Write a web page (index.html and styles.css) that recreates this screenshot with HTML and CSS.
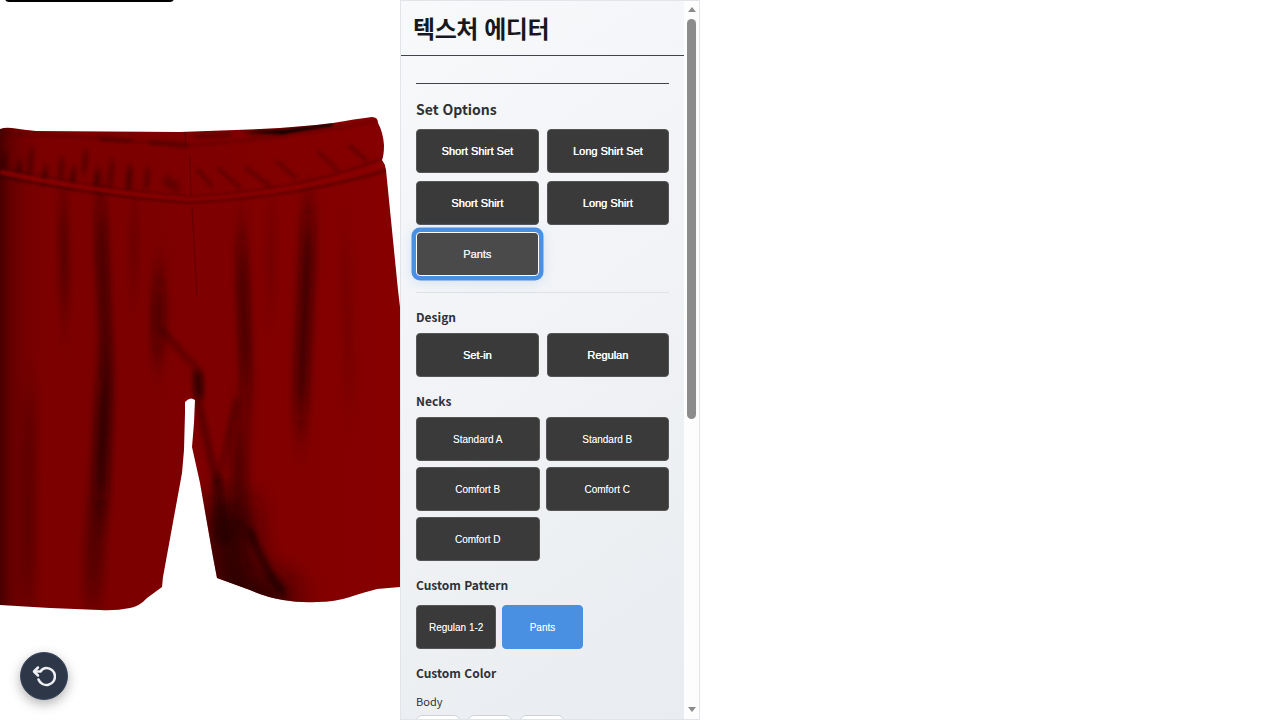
FILE: index.html
```html
<!DOCTYPE html>
<html lang="ko">
<head>
<meta charset="utf-8">
<title>텍스처 에디터</title>
<link rel="stylesheet" href="styles.css">
</head>
<body>
<div class="app">
  <main class="stage">
    <div class="top-pill"></div>
    <svg class="garment" viewBox="0 0 400 720" width="400" height="720" aria-hidden="true">
      <defs>
        <clipPath id="shorts">
          <path d="M0 129 Q5 127 12 128 Q25 130 36 131 L180 132 L260 129 Q300 127 333 123 Q355 119 372 117 Q378 117 378 123 Q383 132 384 145 Q384 155 382 160 Q385 164 386 170 L388 190 L398 290 L400 307 L400 587 L377 589 Q365 592 350 597 Q335 602 317 602 Q300 603 283 600 Q265 597 250 590 L217 578 L213 557 L200 483 L192 447 L194 423 L195 400 Q190 396 185 402 L185 413 L184 450 L182 473 L163 577 L162 587 L147 598 Q140 606 130 608 Q115 611 100 610 L50 608 L0 605 Z"/>
        </clipPath>
        <linearGradient id="base" x1="0" x2="400" y1="0" y2="0" gradientUnits="userSpaceOnUse">
          <stop offset="0" stop-color="#480000"/>
          <stop offset=".025" stop-color="#640000"/>
          <stop offset=".06" stop-color="#740000"/>
          <stop offset=".11" stop-color="#7c0000"/>
          <stop offset=".5" stop-color="#7e0000"/>
          <stop offset=".7" stop-color="#820000"/>
          <stop offset="1" stop-color="#860000"/>
        </linearGradient>
        <filter id="v" x="-200%" y="-30%" width="500%" height="160%"><feGaussianBlur stdDeviation="4 26"/></filter>
        <filter id="w" x="-60%" y="-40%" width="220%" height="180%"><feGaussianBlur stdDeviation="2.500 4"/></filter>
        <filter id="b1" x="-30%" y="-30%" width="160%" height="160%"><feGaussianBlur stdDeviation="1.4"/></filter>
        <filter id="b2" x="-30%" y="-30%" width="160%" height="160%"><feGaussianBlur stdDeviation="2.2"/></filter>
        <filter id="b3" x="-100%" y="-20%" width="300%" height="140%"><feGaussianBlur stdDeviation="3"/></filter>
        <filter id="b14" x="-100%" y="-20%" width="300%" height="140%"><feGaussianBlur stdDeviation="14"/></filter>
      </defs>
      <g clip-path="url(#shorts)">
        <rect width="400" height="720" fill="url(#base)"/>
        <g fill="none" stroke="#1c0000" filter="url(#b14)">
          <path d="M228 500 L232 585 L290 606" stroke-width="46" stroke-opacity=".8"/>
        </g>
        <g fill="none" stroke="#100000" filter="url(#v)">
          <path d="M63 200 L65 310" stroke-width="6" stroke-opacity=".5"/>
          <path d="M100 205 L108 390" stroke-width="9" stroke-opacity=".65"/>
          <path d="M105 380 L100 500" stroke-width="15" stroke-opacity=".7"/>
          <path d="M98 490 L92 600" stroke-width="20" stroke-opacity=".3"/>
          <path d="M135 205 L133 290" stroke-width="5" stroke-opacity=".3"/>
          <path d="M30 400 L28 600" stroke-width="14" stroke-opacity=".2"/>
          <path d="M160 285 L157 345" stroke-width="12" stroke-opacity=".65"/>
          <path d="M241 240 L247 395" stroke-width="9" stroke-opacity=".65"/>
          <path d="M309 215 L300 420" stroke-width="13" stroke-opacity=".6"/>
          <path d="M272 215 L270 300" stroke-width="6" stroke-opacity=".2"/>
          <path d="M345 240 L350 400" stroke-width="9" stroke-opacity=".12"/>
          <path d="M240 420 L238 520" stroke-width="16" stroke-opacity=".45"/>
        </g>
        <g fill="none" stroke="#0c0000" stroke-linecap="round" filter="url(#b3)">
          <path d="M163 330 Q178 350 197 368" stroke-width="4" stroke-opacity=".4"/>
          <path d="M198 374 L199 395" stroke-width="7" stroke-opacity=".9"/>
          <path d="M198 400 L217 485" stroke-width="3" stroke-opacity=".7"/>
          <path d="M237 400 L217 485" stroke-width="2.500" stroke-opacity=".55"/>
          <path d="M218 480 L222 540" stroke-width="8" stroke-opacity=".6"/>
          <path d="M250 530 Q262 565 282 592" stroke-width="4.500" stroke-opacity=".85"/>
        </g>
        <g fill="none" stroke="#080000" stroke-linecap="round" filter="url(#w)" stroke-opacity=".4" stroke-width="4">
          <path d="M6 155 L3 168 M32 150 L29 176 M62 160 L60 178 M86 152 L84 172 M112 162 L110 186 M148 170 L146 188"/>
          <path d="M20 164 L18 176 M46 168 L44 182 M74 170 L72 184 M98 172 L96 186 M130 168 L128 190 M165 180 L178 188" stroke-opacity=".55"/>
        </g>
        <g fill="none" stroke="#080000" stroke-linecap="round" filter="url(#b2)" stroke-opacity=".32" stroke-width="3">
          <path d="M198 170 L212 186 M218 168 L240 188 M246 168 L270 186 M278 162 L296 178 M318 152 L338 170 M350 146 L366 160"/>
          <path d="M100 139 L130 141 M150 142 L186 145 M196 136 L230 135 M250 134 L285 132" stroke-opacity=".35"/>
        </g>
        <path d="M0 168 Q100 190 190 197 Q300 192 386 157" fill="none" stroke="#230000" stroke-opacity=".5" stroke-width="1.600" filter="url(#b1)"/>
        <path d="M0 176 Q100 196 190 202 Q300 196 388 170" fill="none" stroke="#230000" stroke-opacity=".7" stroke-width="1.800" filter="url(#b1)"/>
        <path d="M0 172 Q100 193 190 199.500 Q300 194 387 163" fill="none" stroke="#8c0000" stroke-width="3.500" filter="url(#b1)"/>
        <path d="M0 134 Q60 135 96 138 L186 146 Q290 138 378 121" fill="none" stroke="#250000" stroke-opacity=".35" stroke-width="1.500" filter="url(#b1)"/>
        <path d="M185 131 L186 146 M190 155 L191 196 M192 207 L197 297" fill="none" stroke="#3c0000" stroke-width="1" stroke-opacity=".45"/>
        <path d="M240 132 L283 130 L333 123 L332 126 L283 134 Z" fill="#050000" fill-opacity=".95" filter="url(#b1)"/>
      </g>
    </svg>
    <button class="reset" type="button" aria-label="Reset">
      <svg viewBox="0 0 24 24" width="24" height="24" fill="none" stroke="currentColor" stroke-width="2.500" stroke-linecap="round" stroke-linejoin="round"><path d="M6 3.500 L2 7.500 L6 11.500"/><path d="M2.500 7.500 H8.500 C10 5 12.500 4 14.500 4 A8.500 8.500 0 1 1 6.500 15.500"/></svg>
    </button>
  </main>
  <aside class="panel">
    <div class="panel-scroll">
      <header class="panel-head"><h1>텍스처 에디터</h1></header>
      <div class="panel-body">
        <hr class="rule-dark">
        <h2 class="first">Set Options</h2>
        <div class="grid wide">
          <button class="btn" type="button">Short Shirt Set</button>
          <button class="btn" type="button">Long Shirt Set</button>
          <button class="btn" type="button">Short Shirt</button>
          <button class="btn" type="button">Long Shirt</button>
          <button class="btn focus" type="button">Pants</button>
        </div>
        <hr class="rule-light">
        <h2>Design</h2>
        <div class="grid wide">
          <button class="btn" type="button">Set-in</button>
          <button class="btn" type="button">Regulan</button>
        </div>
        <h2>Necks</h2>
        <div class="grid necks">
          <button class="btn small" type="button">Standard A</button>
          <button class="btn small" type="button">Standard B</button>
          <button class="btn small" type="button">Comfort B</button>
          <button class="btn small" type="button">Comfort C</button>
          <button class="btn small" type="button">Comfort D</button>
        </div>
        <h2>Custom Pattern</h2>
        <div class="grid patterns">
          <button class="btn small" type="button">Regulan 1-2</button>
          <button class="btn small active" type="button">Pants</button>
        </div>
        <h2 class="color-title">Custom Color</h2>
        <h3>Body</h3>
        <div class="swatches">
          <span class="swatch"></span><span class="swatch"></span><span class="swatch"></span>
        </div>
      </div>
    </div>
    <div class="scrollbar" aria-hidden="true">
      <span class="arrow up"></span>
      <div class="track"><span class="thumb"></span></div>
      <span class="arrow down"></span>
    </div>
  </aside>
</div>
</body>
</html>
```
FILE: styles.css
```css
* { box-sizing: border-box; }
html, body { margin: 0; height: 100%; overflow: hidden; background: #fff; }
.app { display: flex; height: 720px; }
.stage { position: relative; width: 400px; height: 720px; flex: none; overflow: hidden; background: #fff; }
.garment { display: block; }
.top-pill { position: absolute; left: 5px; top: -8px; width: 169px; height: 10px; background: #000; border-radius: 4px; }
.reset {
  position: absolute; left: 20px; bottom: 20px; width: 48px; height: 48px; padding: 0;
  display: flex; align-items: center; justify-content: center;
  border-radius: 50%; border: 1px solid #3c4a60; background: #2d3748; color: #eef0f3;
  box-shadow: 0 4px 12px rgba(0,0,0,.3);
}
.panel {
  display: flex; width: 300px; height: 720px; flex: none; overflow: hidden;
  border: 1px solid #e1e5ea; background: #fdfdfd;
  font-family: "Noto Sans CJK KR", "Noto Sans", sans-serif;
}
.panel-scroll { width: 283px; flex: none; overflow: hidden; background: linear-gradient(145deg, #f8f9fb 0%, #e9ecf0 100%); }
.scrollbar { width: 15px; flex: none; display: flex; flex-direction: column; align-items: center; }
.track { flex: 1; width: 100%; padding: 0 3px; }
.thumb { display: block; width: 9px; height: 400px; margin-top: 1px; background: #8c8c8c; border-radius: 5px; }
.arrow { flex: none; width: 0; height: 0; border-left: 4.5px solid transparent; border-right: 4.5px solid transparent; }
.arrow.up { margin: 6px 0; border-bottom: 5px solid #8c8c8c; }
.arrow.down { margin: 6px 0 7px; border-top: 5px solid #8c8c8c; }
.panel-head { height: 55px; border-bottom: 1px solid #3f444b; padding: 9px 12px 0; }
h1 { margin: 0; font-size: 24px; line-height: 36px; font-weight: 700; color: #16181d; letter-spacing: -.45px; }
.panel-body { padding: 27px 15px 0; }
hr { border: 0; margin: 0; height: 1px; }
.rule-dark { background: #3f444b; }
.rule-light { background: #dfe1e4; margin-top: 15px; }
h2 { margin: 14px 0 7px; font-size: 12px; line-height: 19px; font-weight: 700; color: #2c3138; }
h2.first { margin: 15px 0 10px; font-size: 14px; line-height: 20px; }
h2.color-title { margin: 14px 0 6px; }
h3 { margin: 10px 0 5px; font-size: 11px; line-height: 18px; font-weight: 400; color: #2c3138; }
.grid { display: grid; }
.wide { grid-template-columns: 1fr 1fr; gap: 8px; }
.necks { grid-template-columns: 1fr 1fr; gap: 6px; }
.patterns { grid-template-columns: repeat(3, 1fr); gap: 6px; margin-top: 11px; }
.btn {
  height: 44px; padding: 0; border: 1px solid #555; border-radius: 4px; background: #3a3a3a; color: #fff;
  font-family: "Liberation Sans", Arial, sans-serif; font-size: 11px; font-weight: 400;
  text-shadow: .35px 0 0 #fff;
}
.btn.small { font-size: 10px; text-shadow: 0 0 .6px rgba(255,255,255,.45); }
.btn.focus { position: relative; top: -1px; background: #4a4a4a; color: #eee; border-color: #fff; text-shadow: .2px 0 0 #eee; outline: 0; box-shadow: 0 0 0 4.5px #4a90e2, 0 2px 12px 4px rgba(74,144,226,.2); }
.btn.active { background: #4a90e2; border-color: #4a90e2; }
.swatches { display: flex; gap: 8px; }
.swatch { width: 44px; height: 44px; flex: none; border: 1px solid #cfd3d8; border-radius: 6px; background: #fff; }
```
